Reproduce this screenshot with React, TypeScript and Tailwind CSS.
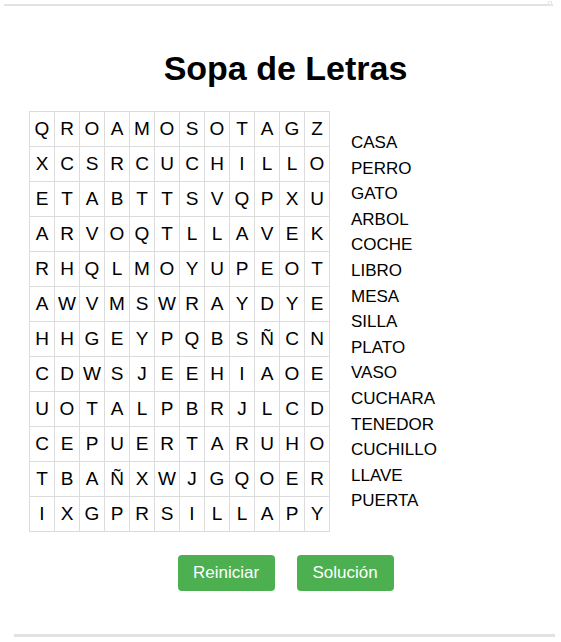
const grid = [
  'QROAMOSOTAGZ',
  'XCSRCUCHILLO',
  'ETABTTSVQPXU',
  'ARVOQTLLAVEK',
  'RHQLMOYUPEOT',
  'AWVMSWRAYDYE',
  'HHGEYPQBSÑCN',
  'CDWSJEEHIAOE',
  'UOTALPBRJLCD',
  'CEPUERTARUHO',
  'TBAÑXWJGQOER',
  'IXGPRSILLAPY',
]

const words = [
  'CASA',
  'PERRO',
  'GATO',
  'ARBOL',
  'COCHE',
  'LIBRO',
  'MESA',
  'SILLA',
  'PLATO',
  'VASO',
  'CUCHARA',
  'TENEDOR',
  'CUCHILLO',
  'LLAVE',
  'PUERTA',
]

export default function App() {
  return (
    <div className="relative h-[642px] w-[561px] overflow-hidden bg-white font-['Liberation_Sans',Arial,sans-serif] text-black">
      <div className="ml-[4px] mt-[4px] h-[2px] w-[549px] bg-[#e2e2e2]" />
      <div className="absolute right-[9px] top-[1px] h-[5px] w-[4px] border border-[#e6e6ec]" />

      <h1 className="mt-[43px] pl-[10px] text-center text-[34px] font-bold leading-[39px]">Sopa de Letras</h1>

      <div className="mt-[23px] flex items-start gap-[21px] pl-[29px]">
        <div className="grid grid-cols-[repeat(12,25px)] border-l border-t border-[#dcdcdc]">
          {grid.flatMap((row, r) =>
            row.split('').map((ch, c) => (
              <div
                key={`${r}-${c}`}
                className="flex h-[35px] items-center justify-center border-b border-r border-[#dcdcdc] text-[19px]"
              >
                {ch}
              </div>
            )),
          )}
        </div>

        <ul className="pt-[19px] text-[17px] leading-[25.6px]">
          {words.map((w) => (
            <li key={w}>{w}</li>
          ))}
        </ul>
      </div>

      <div className="mt-[23px] flex justify-center gap-[22px] pl-[10px]">
        <button className="h-[36px] w-[97px] rounded-[4px] bg-[#4caf50] text-[17px] text-white">Reiniciar</button>
        <button className="h-[36px] w-[97px] rounded-[4px] bg-[#4caf50] text-[17px] text-white">Solución</button>
      </div>

      <div className="absolute bottom-[5px] left-[14px] h-[3px] w-[541px] bg-[#e2e2e2]" />
    </div>
  )
}
